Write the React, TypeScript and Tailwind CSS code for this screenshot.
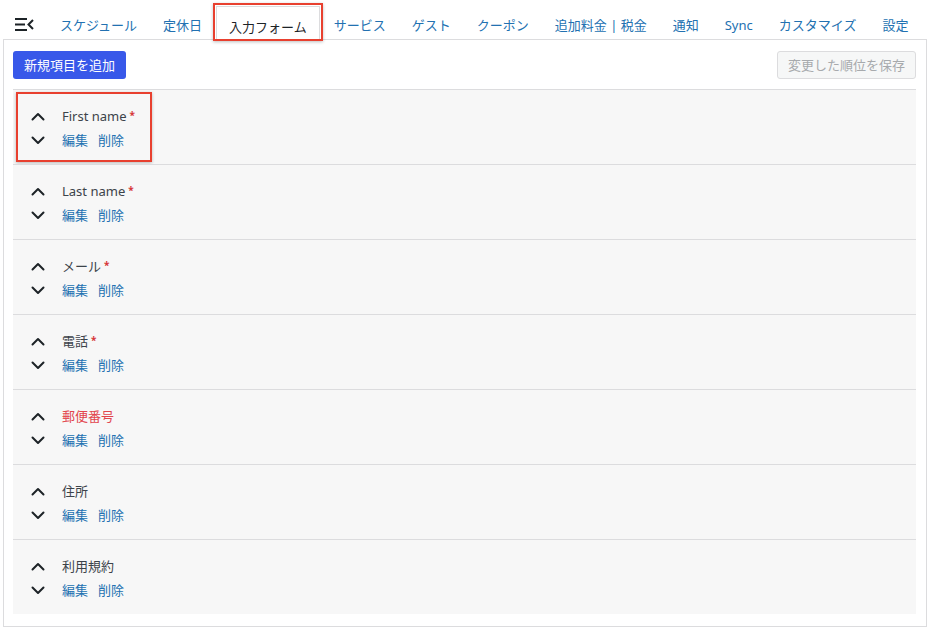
import React from 'react'

const tabs = ['スケジュール', '定休日', '入力フォーム', 'サービス', 'ゲスト', 'クーポン', '追加料金 | 税金', '通知', 'Sync', 'カスタマイズ', '設定']

const fields = [
  { label: 'First name', required: true },
  { label: 'Last name', required: true },
  { label: 'メール', required: true },
  { label: '電話', required: true },
  { label: '郵便番号', required: false, red: true },
  { label: '住所', required: false },
  { label: '利用規約', required: false },
]

function Chevron({ up }: { up?: boolean }) {
  return (
    <svg width="14" height="9" viewBox="0 0 14 9" className="block">
      <polyline
        points={up ? '1.5,7.5 7,2 12.5,7.5' : '1.5,1.5 7,7 12.5,1.5'}
        fill="none"
        stroke="#1d2327"
        strokeWidth="2"
        strokeLinecap="round"
        strokeLinejoin="round"
      />
    </svg>
  )
}

function Row({ label, required, red, first }: { label: string; required: boolean; red?: boolean; first?: boolean }) {
  return (
    <div className="relative h-[75px] border-t border-[#dcdcde] bg-[#f7f7f7] pl-[18px] pt-[16px]">
      {first && (
        <div className="absolute left-[3px] top-[2px] h-[70px] w-[136px] border-[2.5px] border-[#e8402f] shadow-[0_1px_3px_rgba(0,0,0,0.25)]" />
      )}
      <div className="flex items-center h-[20px]">
        <div className="w-[31px]"><Chevron up /></div>
        <span className={red ? 'text-[#e2454d]' : 'text-[#3c434a]'}>{label}</span>
        {required && <span className="ml-[3px] -mt-[3px] text-[10px] font-bold text-[#d63638]">*</span>}
      </div>
      <div className="flex items-center h-[20px] mt-[4px]">
        <div className="w-[31px]"><Chevron /></div>
        <span className="text-[#2271b1]">編集</span>
        <span className="ml-[10px] text-[#2271b1]">削除</span>
      </div>
    </div>
  )
}

export default function App() {
  return (
    <div
      className="w-[929px] h-[636px] bg-white text-[13px] leading-[20px]"
      style={{ fontFamily: '"Noto Sans", "Noto Sans CJK JP", sans-serif' }}
    >
      {/* Tabs */}
      <div className="flex items-end h-[39px] pl-[15px]">
        <svg width="19" height="13" viewBox="0 0 19 13" className="mb-[8px] mr-[13px]">
          <rect x="0" y="0" width="12" height="2" fill="#1d2327" />
          <rect x="0" y="5.5" width="10" height="2" fill="#1d2327" />
          <rect x="0" y="11" width="12" height="2" fill="#1d2327" />
          <polyline points="18,2 13.5,6.5 18,11" fill="none" stroke="#1d2327" strokeWidth="2" />
        </svg>
        {tabs.map((t) =>
          t === '入力フォーム' ? (
            <div key={t} className="relative mx-[1px] -mb-px">
              <div className="h-[34px] px-[12px] pt-[10px] border border-b-0 border-[#dcdcde] bg-white text-[#1d2327]">{t}</div>
              <div className="absolute -left-[3px] -right-[3px] -top-[3px] bottom-[-1px] border-[2.5px] border-[#e8402f] shadow-[0_1px_3px_rgba(0,0,0,0.25)]" />
            </div>
          ) : (
            <div key={t} className="h-[34px] px-[13px] pt-[10px] text-[#2271b1] whitespace-nowrap">{t}</div>
          )
        )}
      </div>

      {/* Panel */}
      <div className="ml-[3px] w-[924px] h-[588px] border border-[#dcdcde] bg-white pl-[9px] pr-[10px] pt-[11px]">
        <div className="flex justify-between h-[28px]">
          <button className="h-[28px] px-[11px] rounded-[3px] bg-[#3858e9] text-white">新規項目を追加</button>
          <button className="h-[28px] px-[10px] rounded-[3px] border border-[#dcdcde] bg-[#f6f7f7] text-[#a7aaad]">変更した順位を保存</button>
        </div>
        <div className="mt-[10px]">
          {fields.map((f, i) => (
            <Row key={f.label} label={f.label} required={f.required} red={f.red} first={i === 0} />
          ))}
        </div>
      </div>
    </div>
  )
}
